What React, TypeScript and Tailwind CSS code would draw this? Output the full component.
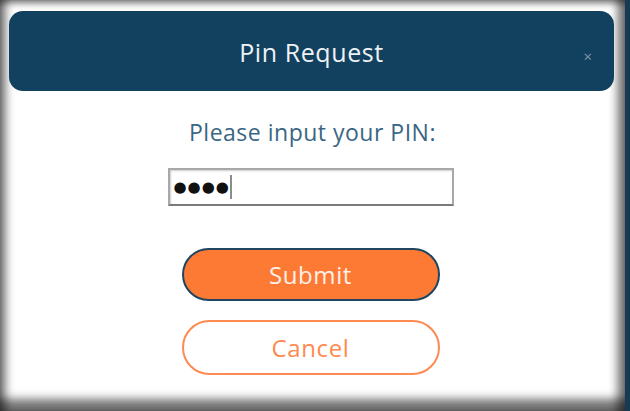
import { useState } from 'react'

export default function App() {
  const [pin, setPin] = useState('1234')
  const masked = '●'.repeat(pin.length)

  return (
    <div className="w-[630px] h-[411px] overflow-hidden bg-white border-r-[5px] border-[#163a52] shadow-[inset_10px_0_8px_-4px_rgba(0,0,0,0.5),inset_0_7px_6px_-3px_rgba(0,0,0,0.4),inset_-12px_0_9px_-4px_rgba(0,0,0,0.5),inset_0_-16px_10px_-4px_rgba(0,0,0,0.55)] font-['Open_Sans',sans-serif]">
      <div className="pt-[11px] pl-[9px] pr-[11px]">
        <div className="relative h-[80px] rounded-[14px] bg-[#12415f] flex items-center justify-center">
          <h1 className="text-[25px] leading-none text-[#eef2f5] tracking-[0.6px] mt-[2px]">Pin Request</h1>
          <button className="absolute right-[22px] top-[38px] text-[15px] leading-none text-[#7d97ab]">×</button>
        </div>
      </div>

      <div className="flex flex-col items-center">
        <p className="mt-[28px] text-[23px] leading-[26px] text-[#3a6684] tracking-[0.5px]">Please input your PIN:</p>
        <div className="relative mt-[23px] ml-[-4px]">
          {/* masked pin shown with big dots like the reference */}
          <input
            type="text"
            value={masked}
            onChange={(e) => setPin(e.target.value)}
            className="block w-[286px] h-[38px] px-[4px] border-2 border-[#a8a8a8] border-b-[#7a7a7a] bg-white font-['DejaVu_Sans',sans-serif] text-[15px] tracking-[1px] text-[#111] outline-none shadow-[inset_1px_1px_2px_rgba(0,0,0,0.2)]"
          />
          <span className="absolute left-[62px] top-[7px] w-[2px] h-[24px] bg-[#8c8c8c]" />
        </div>
        <button className="mt-[42px] ml-[-4px] w-[258px] h-[53px] rounded-full bg-[#fd7a35] border-2 border-[#1f4560] text-[24px] text-[#fdf1ea] tracking-[0.6px]">
          Submit
        </button>
        <button className="mt-[19px] ml-[-4px] w-[258px] h-[55px] rounded-full bg-white border-2 border-[#fd8a50] text-[24px] text-[#fd8a50] tracking-[0.6px]">
          Cancel
        </button>
      </div>
    </div>
  )
}
